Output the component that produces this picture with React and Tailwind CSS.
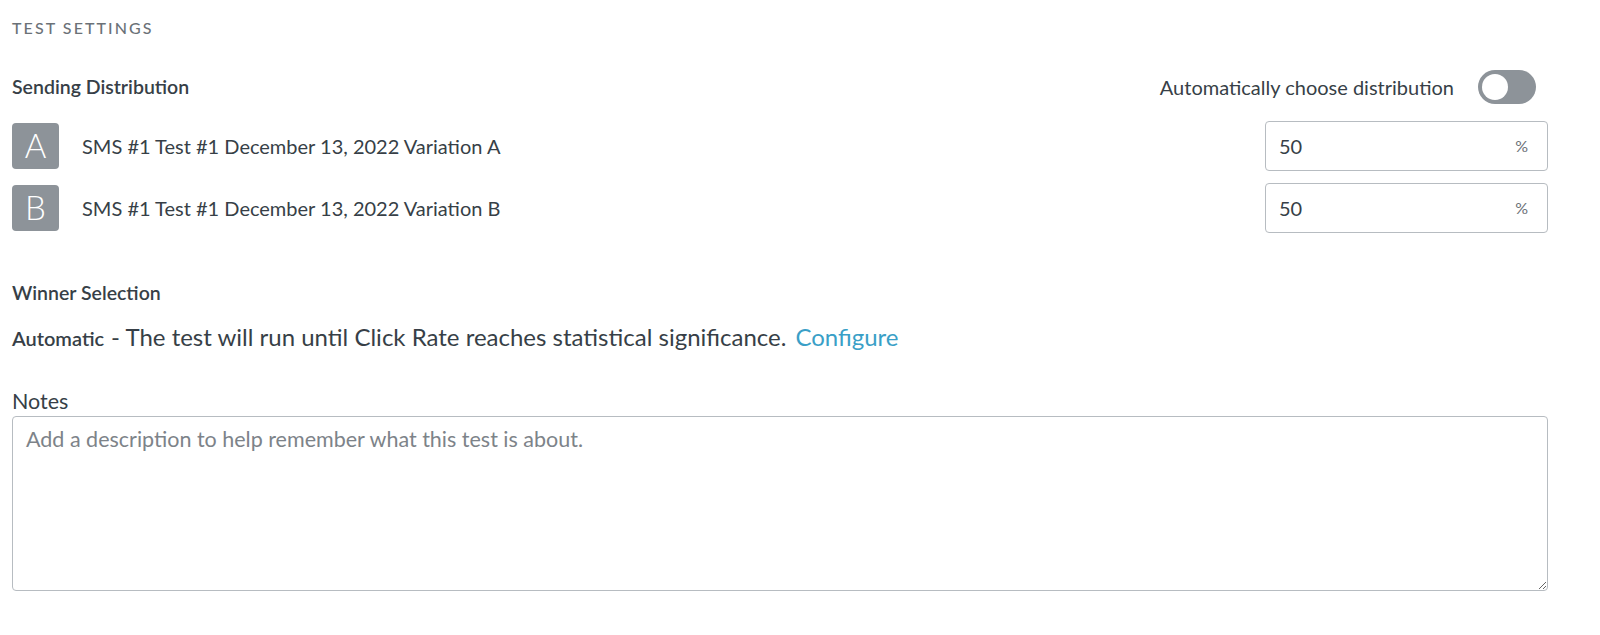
import { useState } from "react";

const variations = [
  { letter: "A", name: "SMS #1 Test #1 December 13, 2022 Variation A", value: "50" },
  { letter: "B", name: "SMS #1 Test #1 December 13, 2022 Variation B", value: "50" },
];

export default function App() {
  const [auto, setAuto] = useState(false);

  return (
    <div className="bg-white min-h-[635px] pl-[12px] pr-[52px] pt-[19px] font-['Lato',sans-serif] text-[#373f47]">
      <h2 className="text-[16px] tracking-[0.13em] uppercase text-[#6b7177] font-medium leading-[18px]">
        Test Settings
      </h2>

      <div className="mt-[32px] flex items-center justify-between h-[36px]">
        <h3 className="text-[19.5px] font-semibold">Sending Distribution</h3>
        <div className="flex items-center gap-[24px] mr-[12px]">
          <span className="text-[20px] text-[#373f47]">Automatically choose distribution</span>
          <button
            onClick={() => setAuto(!auto)}
            className={`w-[58px] h-[34px] rounded-full p-[4px] flex ${auto ? "bg-[#3a9fc7] justify-end" : "bg-[#8d9399] justify-start"}`}
          >
            <span className="w-[26px] h-[26px] rounded-full bg-white" />
          </button>
        </div>
      </div>

      <div className="mt-[16px] flex flex-col gap-[12px]">
        {variations.map((v) => (
          <div key={v.letter} className="flex items-center justify-between">
            <div className="flex items-center">
              <div className="w-[47px] h-[46px] rounded-[4px] bg-[#8d9399] text-white text-[33px] font-light flex items-center justify-center">
                {v.letter}
              </div>
              <span className="ml-[23px] text-[20px]">{v.name}</span>
            </div>
            <div className="w-[283px] h-[50px] border border-[#b7bcc1] rounded-[4px] flex items-center justify-between pl-[13px] pr-[19px]">
              <span className="text-[20px] text-[#373f47]">{v.value}</span>
              <span className="text-[16px] text-[#6b7177]">%</span>
            </div>
          </div>
        ))}
      </div>

      <h3 className="mt-[45px] text-[19.5px] font-semibold">Winner Selection</h3>
      <p className="mt-[12px] flex items-baseline">
        <span className="text-[20px] font-semibold">Automatic</span>
        <span className="text-[24px] ml-[7px]">- The test will run until Click Rate reaches statistical significance.</span>
        <a href="#" className="text-[24px] text-[#3a9fc7] ml-[9px]">Configure</a>
      </p>

      <label className="block mt-[33px] text-[21.5px] leading-[26px]">Notes</label>
      <textarea
        placeholder="Add a description to help remember what this test is about."
        className="block mt-[2px] w-full h-[175px] border border-[#b7bcc1] rounded-[4px] px-[13px] py-[6px] text-[21.5px] placeholder:text-[#7d8389] outline-none"
      />
    </div>
  );
}
